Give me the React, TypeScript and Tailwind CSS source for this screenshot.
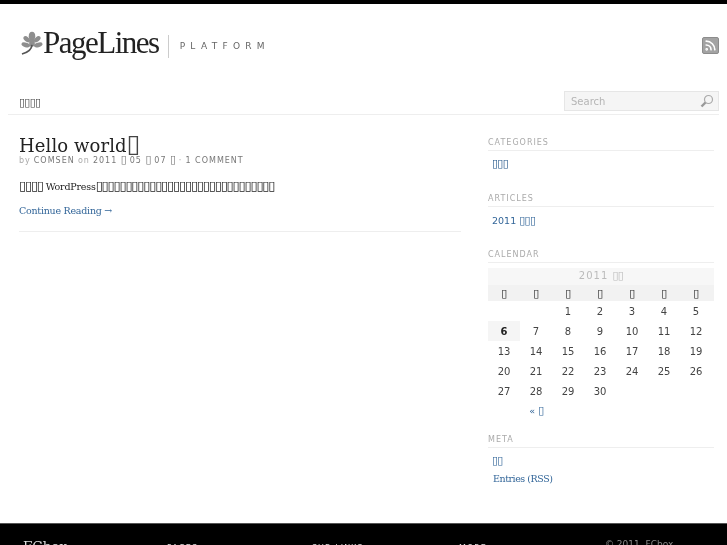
import React from 'react';
import { Rss } from 'lucide-react';

const sans = "font-['DejaVu_Sans',sans-serif]";
const serif = "font-['DejaVu_Serif',serif]";

const weeks: (number | null)[][] = [
  [null, null, 1, 2, 3, 4, 5],
  [6, 7, 8, 9, 10, 11, 12],
  [13, 14, 15, 16, 17, 18, 19],
  [20, 21, 22, 23, 24, 25, 26],
  [27, 28, 29, 30, null, null, null],
];

// the page's Chinese text shows as missing-glyph boxes in the reference
const Boxes = ({ n, className = 'text-[11px] tracking-[-0.7px]' }: { n: number; className?: string }) => (
  <span className={`font-['DejaVu_Sans',sans-serif] ${className}`}>{'▯'.repeat(n)}</span>
);

const LeafLogo = () => (
  <svg width="22" height="25" viewBox="0 0 23 25" className="shrink-0 mt-[-6px]">
    <g fill="#8e8e8e">
      <ellipse cx="11.5" cy="5" rx="3.4" ry="4.8" />
      <ellipse cx="6" cy="8" rx="2.4" ry="4" transform="rotate(-50 6 8)" />
      <ellipse cx="17" cy="8" rx="2.4" ry="4" transform="rotate(50 17 8)" />
      <ellipse cx="5" cy="14" rx="2.4" ry="4.6" transform="rotate(-75 5 14)" />
      <ellipse cx="18" cy="14" rx="2.4" ry="4.6" transform="rotate(75 18 14)" />
      <ellipse cx="11.5" cy="12" rx="3" ry="4" />
    </g>
    <path d="M11.5 14 C11 19 7 22 1 23.5" stroke="#555555" strokeWidth="1.8" fill="none" />
  </svg>
);

const WidgetTitle = ({ children }: { children: React.ReactNode }) => (
  <h3 className={`${sans} h-[13px] border-b border-[#eeeeee] text-[8px] leading-[10px] tracking-[1px] text-[#aaaaaa]`}>
    {children}
  </h3>
);

export default function App() {
  return (
    <div className="h-screen overflow-hidden bg-white flex flex-col">
      <div className="h-1 bg-black shrink-0" />

      <header className="h-[111px] shrink-0 ml-2 w-[711px] border-b border-[#eeeeee] flex flex-col will-change-transform">
        <div className="flex items-start justify-between pt-[24px] pl-[13px]">
          <div className="flex items-center h-[36px]">
            <LeafLogo />
            <span className="font-['Liberation_Serif',serif] text-[31px] leading-[36px] pb-[7px] tracking-[-1.5px] text-[#222222]">
              PageLines
            </span>
            <span className="ml-[9px] h-[23px] w-px bg-[#cccccc]" />
            <span className={`${sans} ml-[11px] mt-[2px] text-[9px] tracking-[5.3px] text-[#666666]`}>PLATFORM</span>
          </div>
          <div className="mt-[9px] w-[17px] h-[17px] rounded-[2px] bg-[#a3a3a3] border border-[#8c8c8c] flex items-center justify-center">
            <Rss size={13} strokeWidth={3} className="text-white" />
          </div>
        </div>
        <div className="flex items-end justify-between mt-auto pl-[11px] pb-[3px]">
          <a className="leading-[14px] mb-[1px] text-[#444444]"><Boxes n={4} /></a>
          <div className="w-[155px] h-[20px] bg-[#f5f5f5] border border-[#e6e6e6] flex items-center justify-between pl-[6px] pr-[4px]">
            <span className={`${sans} text-[10px] text-[#b5b5b5]`}>Search</span>
            <svg width="14" height="14" viewBox="0 0 14 14">
              <circle cx="8.5" cy="5.5" r="4" fill="none" stroke="#aaaaaa" strokeWidth="1.2" />
              <path d="M5.5 8.5 L1.5 12.5" stroke="#999999" strokeWidth="2.4" />
            </svg>
          </div>
        </div>
      </header>

      <main className="flex flex-1 min-h-0 pl-[19px] will-change-transform">
        <article className="w-[442px] shrink-0 h-[117px] border-b border-[#eeeeee]">
          <h1 className={`${serif} mt-[18px] text-[18px] leading-[22px] tracking-[0.1px] font-normal text-[#222222]`}>
            Hello world<Boxes n={1} className="text-[25px] tracking-[-1px] text-[#444444]" />
          </h1>
          <p className={`${sans} -mt-[2px] text-[8px] leading-[10px] tracking-[0.8px] text-[#aaaaaa]`}>
            by <span className="text-[#777777] tracking-[1px]">COMSEN</span> on{' '}
            <span className="text-[#777777] tracking-[1px]">2011 <Boxes n={1} /> 05 <Boxes n={1} /> 07 <Boxes n={1} /></span> ·{' '}
            <span className="text-[#777777] tracking-[1px]">1 COMMENT</span>
          </p>
          <p className={`${serif} mt-[12px] text-[9.5px] leading-[16px] tracking-[-0.2px] text-[#222222]`}>
            <Boxes n={4} className="text-[13px] tracking-[-1.2px]" /> WordPress<Boxes n={30} className="text-[13px] tracking-[-1.2px]" />
          </p>
          <a className={`${serif} block mt-[8px] text-[9.5px] leading-[16px] tracking-[-0.25px] text-[#336699]`}>Continue Reading →</a>
        </article>

        <aside className="ml-[27px] w-[226px] shrink-0 pt-[23px]">
          <WidgetTitle>CATEGORIES</WidgetTitle>
          <div className="mt-[4px] pl-[4px] h-[39px] leading-[12px] text-[#225588]"><Boxes n={3} /></div>

          <WidgetTitle>ARTICLES</WidgetTitle>
          <div className={`${sans} mt-[7px] pl-[4px] h-[36px] text-[9.5px] leading-[13px] text-[#336699]`}>2011 <Boxes n={3} /></div>

          <WidgetTitle>CALENDAR</WidgetTitle>
          <div className={`${sans} mt-[5px]`}>
            <div className="h-[17px] bg-[#f7f7f7] text-center text-[10px] leading-[15px] tracking-[1px] text-[#bbbbbb]">2011 <Boxes n={2} /></div>
            <div className="grid grid-cols-7 h-[16px] pr-[2px] bg-[#f2f2f2] text-center leading-[14px] text-[#222222]">
              {Array.from({ length: 7 }).map((_, i) => <span key={i}><Boxes n={1} /></span>)}
            </div>
            {weeks.map((week, w) => (
              <div key={w} className="grid grid-cols-7 grid-rows-[20px] h-[20px] pr-[2px] text-center text-[10px] leading-[21px] text-[#444444]">
                {week.map((d, i) => (
                  <span key={i} className={d === 6 ? 'bg-[#f5f5f5] font-bold text-[#222222]' : ''}>{d}</span>
                ))}
              </div>
            ))}
            <div className="grid grid-cols-7 h-[20px] text-center text-[9.5px] leading-[20px] text-[#336699]">
              <span />
              <span>« <Boxes n={1} /></span>
            </div>
          </div>

          <div className="mt-[14px]">
            <WidgetTitle>META</WidgetTitle>
          </div>
          <div className="mt-[4px] pl-[4px] text-[9.5px] leading-[18px] text-[#336699]">
            <div><Boxes n={2} /></div>
            <div className={`${serif} pl-px tracking-[-0.45px]`}>Entries (RSS)</div>
          </div>
        </aside>
      </main>

      <footer className="h-[22px] shrink-0 bg-black border-t border-[#555555] overflow-hidden text-[#dddddd]">
        <div className="flex will-change-transform">
          <span className={`${serif} pl-[23px] w-[167px] shrink-0 pt-[13px] text-[13.5px] leading-[18px]`}>FCbox</span>
          <span className={`${sans} w-[145px] shrink-0 pt-[20px] text-[8px] leading-[10px] tracking-[1px]`}>PAGES</span>
          <span className={`${sans} w-[147px] shrink-0 pt-[20px] text-[8px] leading-[10px] tracking-[1px]`}>SUB-LINKS</span>
          <span className={`${sans} w-[146px] shrink-0 pt-[20px] text-[8px] leading-[10px] tracking-[1px]`}>MORE</span>
          <span className={`${sans} pt-[14px] text-[9px] leading-[12px] text-[#888888]`}>© 2011, FCbox</span>
        </div>
      </footer>
    </div>
  );
}
